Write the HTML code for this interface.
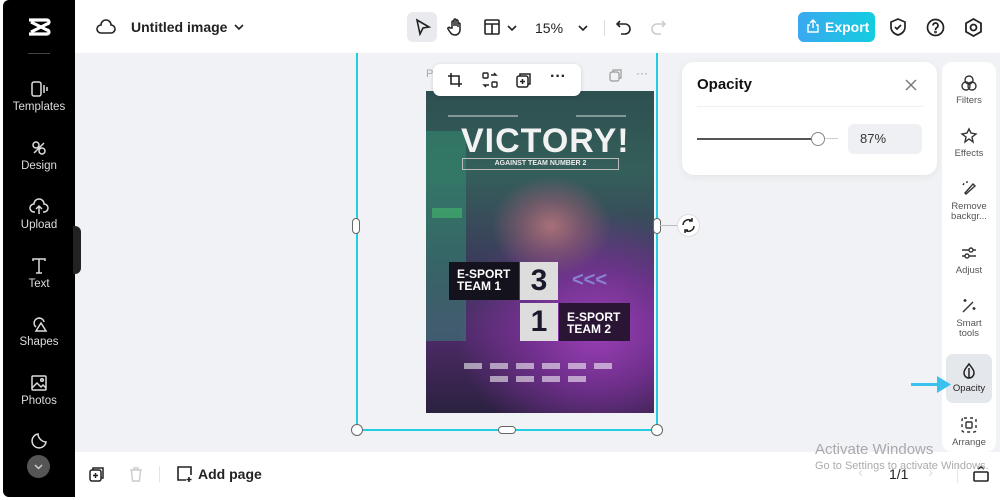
<!DOCTYPE html>
<html><head><meta charset="utf-8"><style>
*{margin:0;padding:0;box-sizing:border-box}
body{width:1000px;height:500px;overflow:hidden;background:#fff;font-family:"Liberation Sans",sans-serif;position:relative}
.abs{position:absolute}
.side{left:3px;top:0;width:72px;height:497px;background:#000;border-radius:6px 0 0 6px}
.si{position:absolute;left:0;width:72px;text-align:center;color:#ddd;font-size:11.5px}
.si svg{display:block;margin:0 auto 3px}
.rp{left:942px;top:62px;width:54px;height:390px;background:#fff;border-radius:10px}
.ri{position:absolute;left:0;width:54px;text-align:center;color:#555;font-size:9.5px;line-height:10px}
.ri svg{display:block;margin:0 auto 4px}
</style></head><body>
<div class="abs" style="left:75px;top:53px;width:925px;height:400px;background:#f0f2f5"></div>
<div class="abs side">
 <svg class="abs" style="left:24px;top:17px" width="24" height="20" viewBox="0 0 24 20"><path d="M2 3h18a2 2 0 010 4L4 15M2 17h18a2 2 0 000-4L4 5" stroke="#fff" stroke-width="3.2" fill="none" stroke-linejoin="round"/></svg>
 <div class="abs" style="left:25px;top:53px;width:22px;height:1px;background:#444"></div>
 <div class="si" style="top:80px"><svg width="18" height="18" viewBox="0 0 18 18" fill="none" stroke="#ddd" stroke-width="1.5"><rect x="2" y="2" width="9" height="14" rx="2"/><path d="M14 5v8M17 7v4"/></svg>Templates</div>
 <div class="si" style="top:139px"><svg width="18" height="18" viewBox="0 0 18 18" fill="none" stroke="#ddd" stroke-width="1.5"><circle cx="6" cy="6" r="3"/><circle cx="12" cy="12" r="3"/><path d="M4 14l10-10"/></svg>Design</div>
 <div class="si" style="top:198px"><svg width="20" height="18" viewBox="0 0 20 18" fill="none" stroke="#ddd" stroke-width="1.5"><path d="M6 14H5a4 4 0 010-8 5 5 0 0110 0 4 4 0 010 8h-1M10 16V9M7 11l3-3 3 3"/></svg>Upload</div>
 <div class="si" style="top:257px"><svg width="18" height="18" viewBox="0 0 18 18" fill="none" stroke="#ddd" stroke-width="1.5"><path d="M3 4V2h12v2M9 2v14M6 16h6"/></svg>Text</div>
 <div class="si" style="top:315px"><svg width="18" height="18" viewBox="0 0 18 18" fill="none" stroke="#ddd" stroke-width="1.5"><path d="M6 12a5 5 0 118-5"/><path d="M11 8l5 8H6z"/></svg>Shapes</div>
 <div class="si" style="top:374px"><svg width="18" height="18" viewBox="0 0 18 18" fill="none" stroke="#ddd" stroke-width="1.5"><rect x="2" y="2" width="14" height="14" rx="1"/><path d="M2 14l5-5 4 4 2-2 3 3"/><circle cx="12" cy="6" r="1.3"/></svg>Photos</div>
 <svg class="abs" style="left:27px;top:432px" width="18" height="18" viewBox="0 0 18 18" fill="none" stroke="#ddd" stroke-width="1.5"><path d="M16 10A7 7 0 118 2c0 4 4 8 8 8z"/></svg>
 <div class="abs" style="left:24px;top:455px;width:23px;height:23px;border-radius:50%;background:#555"><svg width="23" height="23" viewBox="0 0 23 23"><path d="M8 10l3.5 3.5L15 10" stroke="#ccc" stroke-width="1.5" fill="none"/></svg></div>
</div>
<div class="abs" style="left:73px;top:226px;width:8px;height:48px;background:#222;border-radius:0 6px 6px 0"></div>
<!-- top bar -->
<svg class="abs" style="left:96px;top:19px" width="20" height="18" viewBox="0 0 20 18" fill="none" stroke="#222" stroke-width="1.6"><path d="M6 14H5a4 4 0 010-8 5 5 0 0110 0 4 4 0 010 8H6z"/></svg>
<div class="abs" style="left:131px;top:19px;font-size:14px;color:#222;font-weight:bold">Untitled image</div>
<svg class="abs" style="left:233px;top:21px" width="12" height="12"><path d="M2 4l4 4 4-4" stroke="#222" stroke-width="1.6" fill="none"/></svg>
<div class="abs" style="left:407px;top:12px;width:30px;height:30px;border-radius:6px;background:#e8eaee"></div>
<svg class="abs" style="left:414px;top:18px" width="18" height="18" viewBox="0 0 18 18" fill="none" stroke="#222" stroke-width="1.6"><path d="M3 2l12 7-6 1-3 6z"/></svg>
<svg class="abs" style="left:446px;top:17px" width="20" height="20" viewBox="0 0 20 20" fill="none" stroke="#222" stroke-width="1.5"><path d="M6 11V5a1 1 0 012 0v4V3a1 1 0 012 0v6V4a1 1 0 012 0v6-3a1 1 0 012 0v6a5 5 0 01-5 5 6 6 0 01-5-3l-2-3a1 1 0 012-1z"/></svg>
<svg class="abs" style="left:484px;top:19px" width="16" height="16" viewBox="0 0 16 16" fill="none" stroke="#222" stroke-width="1.6"><rect x="1" y="1" width="14" height="14" rx="1"/><path d="M1 5h14M8 5v10"/></svg>
<svg class="abs" style="left:506px;top:22px" width="12" height="12"><path d="M2 4l4 4 4-4" stroke="#222" stroke-width="1.6" fill="none"/></svg>
<div class="abs" style="left:535px;top:20px;font-size:14px;color:#222">15%</div>
<svg class="abs" style="left:577px;top:22px" width="12" height="12"><path d="M2 4l4 4 4-4" stroke="#222" stroke-width="1.6" fill="none"/></svg>
<div class="abs" style="left:604px;top:20px;width:1px;height:16px;background:#ddd"></div>
<svg class="abs" style="left:615px;top:18px" width="18" height="18" viewBox="0 0 18 18" fill="none" stroke="#222" stroke-width="1.6"><path d="M5 3L2 6l3 3M2 6h8a5 5 0 010 10H6"/></svg>
<svg class="abs" style="left:649px;top:18px" width="18" height="18" viewBox="0 0 18 18" fill="none" stroke="#ccc" stroke-width="1.6"><path d="M13 3l3 3-3 3M16 6H8a5 5 0 000 10h4"/></svg>
<div class="abs" style="left:798px;top:12px;width:77px;height:30px;border-radius:6px;background:linear-gradient(90deg,#3aa9f0,#13cde0);color:#fff;font-size:14px;font-weight:bold;line-height:30px;padding-left:27px">Export</div>
<svg class="abs" style="left:806px;top:19px" width="14" height="14" viewBox="0 0 14 14" fill="none" stroke="#fff" stroke-width="1.4"><path d="M4 6H2v7h10V6h-2M7 9V1M4 4l3-3 3 3"/></svg>
<svg class="abs" style="left:889px;top:18px" width="18" height="18" viewBox="0 0 18 18" fill="none" stroke="#222" stroke-width="1.7"><path d="M9 1l7 3v5c0 4-3 7-7 8-4-1-7-4-7-8V4z"/><path d="M6 9l2 2 4-4"/></svg>
<svg class="abs" style="left:926px;top:18px" width="19" height="19" viewBox="0 0 19 19" fill="none" stroke="#222" stroke-width="1.7"><circle cx="9.5" cy="9.5" r="8"/><path d="M7 7.5a2.5 2.5 0 114 2c-1 .6-1.5 1-1.5 2.5"/><circle cx="9.5" cy="14" r=".5"/></svg>
<svg class="abs" style="left:964px;top:18px" width="19" height="19" viewBox="0 0 19 19" fill="none" stroke="#222" stroke-width="1.8"><path d="M9.5 1l7.5 4.25v8.5L9.5 18 2 13.75v-8.5z"/><circle cx="9.5" cy="9.5" r="3"/></svg>
<!-- canvas -->
<div class="abs" style="left:426px;top:68px;font-size:11px;color:#aaa">P</div>
<svg class="abs" style="left:609px;top:68px" width="14" height="14" viewBox="0 0 14 14" fill="none" stroke="#999" stroke-width="1.2"><rect x="1" y="4" width="9" height="9" rx="2"/><path d="M4 4V2h8v8h-2"/></svg>
<div class="abs" style="left:636px;top:66px;font-size:12px;color:#999">···</div>
<div class="abs" style="left:426px;top:91px;width:228px;height:322px;background:
radial-gradient(ellipse 60px 50px at 125px 135px,#a87078 0%,rgba(150,95,115,.6) 50%,transparent 100%),
radial-gradient(ellipse 140px 120px at 170px 240px,#9a3fb5 0%,rgba(130,50,160,.7) 50%,transparent 100%),
linear-gradient(180deg,#2e4f50 0%,#345f5a 25%,#3b3a5a 55%,#4e2b68 75%,#2b2140 100%);overflow:hidden">
 <div class="abs" style="left:0;top:40px;width:40px;height:210px;background:rgba(50,150,120,.45)"></div>
 <div class="abs" style="left:6px;top:117px;width:30px;height:10px;background:rgba(70,200,110,.5)"></div>
 <div class="abs" style="left:22px;top:24px;width:70px;height:2px;background:rgba(255,255,255,.4)"></div>
 <div class="abs" style="left:150px;top:24px;width:50px;height:2px;background:rgba(255,255,255,.4)"></div>
 <div class="abs" style="left:35px;top:31px;font-size:34px;font-weight:bold;color:#f2f2f2;letter-spacing:1px;font-family:'Liberation Sans',sans-serif">VICTORY!</div>
 <div class="abs" style="left:36px;top:67px;width:157px;height:12px;border:1px solid #bbb;color:#eee;font-size:7px;font-weight:bold;text-align:center;line-height:10px">AGAINST TEAM NUMBER 2</div>
 <div class="abs" style="left:23px;top:171px;width:70px;height:38px;background:#14121c;color:#fff;font-size:12px;font-weight:bold;line-height:12px;padding:6px 0 0 8px">E-SPORT<br>TEAM 1</div>
 <div class="abs" style="left:94px;top:171px;width:38px;height:38px;background:#ddd;color:#1a1a2a;font-size:30px;font-weight:bold;text-align:center;line-height:38px">3</div>
 <div class="abs" style="left:94px;top:212px;width:38px;height:38px;background:#ddd;color:#1a1a2a;font-size:30px;font-weight:bold;text-align:center;line-height:38px">1</div>
 <div class="abs" style="left:133px;top:212px;width:71px;height:38px;background:#2a1535;color:#fff;font-size:12px;font-weight:bold;line-height:12px;padding:8px 0 0 8px">E-SPORT<br>TEAM 2</div>
 <div class="abs" style="left:146px;top:178px;color:#8b7fd0;font-size:20px;font-weight:bold">&lt;&lt;&lt;</div>
 <div class="abs" style="left:38px;top:272px;width:150px;height:6px;background:repeating-linear-gradient(90deg,rgba(255,255,255,.55) 0 18px,transparent 18px 26px)"></div>
 <div class="abs" style="left:64px;top:285px;width:100px;height:6px;background:repeating-linear-gradient(90deg,rgba(255,255,255,.55) 0 18px,transparent 18px 26px)"></div>
</div>
<div class="abs" style="left:356px;top:53px;width:302px;height:378px;border:2px solid #22cde0;border-top:none"></div>
<div class="abs" style="left:351px;top:424px;width:12px;height:12px;border-radius:50%;background:#fff;border:1px solid #666"></div>
<div class="abs" style="left:651px;top:424px;width:12px;height:12px;border-radius:50%;background:#fff;border:1px solid #666"></div>
<div class="abs" style="left:498px;top:426px;width:18px;height:8px;border-radius:4px;background:#fff;border:1px solid #666"></div>
<div class="abs" style="left:352px;top:218px;width:8px;height:16px;border-radius:4px;background:#fff;border:1px solid #666"></div>
<div class="abs" style="left:653px;top:218px;width:8px;height:16px;border-radius:4px;background:#fff;border:1px solid #666"></div>
<div class="abs" style="left:660px;top:225px;width:18px;height:1px;background:#bbb"></div>
<div class="abs" style="left:677px;top:214px;width:23px;height:23px;border-radius:50%;background:#fff;border:1px solid #ddd"><svg width="21" height="21" viewBox="0 0 21 21" fill="none" stroke="#222" stroke-width="1.5"><path d="M5 10a5.5 5.5 0 019-4M16 11a5.5 5.5 0 01-9 4M14 3v3h-3M7 18v-3h3"/></svg></div>
<div class="abs" style="left:433px;top:64px;width:148px;height:32px;background:#fff;border-radius:7px;box-shadow:0 1px 4px rgba(0,0,0,.15)">
 <svg class="abs" style="left:14px;top:8px" width="16" height="16" viewBox="0 0 16 16" fill="none" stroke="#222" stroke-width="1.6"><path d="M4 1v11h11M1 4h11v11"/></svg>
 <svg class="abs" style="left:49px;top:8px" width="16" height="16" viewBox="0 0 16 16" fill="none" stroke="#222" stroke-width="1.4"><rect x="1" y="1" width="5" height="5" rx="1"/><rect x="10" y="10" width="5" height="5" rx="1"/><path d="M9 3h5l-2-2M7 13H2l2 2"/></svg>
 <svg class="abs" style="left:83px;top:8px" width="16" height="16" viewBox="0 0 16 16" fill="none" stroke="#222" stroke-width="1.5"><rect x="1" y="4" width="11" height="11" rx="2"/><path d="M4 4V2h10v10h-2M6.5 7v5M4 9.5h5"/></svg>
 <div class="abs" style="left:117px;top:4px;font-size:16px;font-weight:bold;color:#222">···</div>
</div>
<!-- opacity panel -->
<div class="abs" style="left:682px;top:62px;width:255px;height:113px;background:#fff;border-radius:12px;box-shadow:0 2px 8px rgba(0,0,0,.06)">
 <div class="abs" style="left:15px;top:14px;font-size:15px;font-weight:bold;color:#111">Opacity</div>
 <svg class="abs" style="left:222px;top:16px" width="14" height="14"><path d="M2 2l10 10M12 2L2 12" stroke="#777" stroke-width="1.4"/></svg>
 <div class="abs" style="left:15px;top:44px;width:226px;height:1px;background:#f0f0f0"></div>
 <div class="abs" style="left:15px;top:76px;width:122px;height:2px;background:#555"></div>
 <div class="abs" style="left:137px;top:76px;width:19px;height:1px;background:#ccc"></div>
 <div class="abs" style="left:129px;top:70px;width:14px;height:14px;border-radius:50%;background:#fff;border:1px solid #888"></div>
 <div class="abs" style="left:166px;top:62px;width:74px;height:30px;background:#eef0f3;border-radius:6px;font-size:13px;color:#333;line-height:30px;padding-left:12px">87%</div>
</div>
<!-- right panel -->
<div class="abs rp">
 <div class="ri" style="top:12px"><svg width="18" height="18" viewBox="0 0 18 18" fill="none" stroke="#333" stroke-width="1.4"><circle cx="9" cy="6" r="4"/><circle cx="6" cy="12" r="4"/><circle cx="12" cy="12" r="4"/></svg>Filters</div>
 <div class="ri" style="top:65px"><svg width="18" height="18" viewBox="0 0 18 18" fill="none" stroke="#333" stroke-width="1.4"><path d="M9 2l2 4 5 1-4 3 1 5-4-3-4 3 1-5-4-3 5-1z"/></svg>Effects</div>
 <div class="ri" style="top:118px"><svg width="18" height="18" viewBox="0 0 18 18" fill="none" stroke="#333" stroke-width="1.4"><path d="M3 5a6 6 0 016-3" stroke-dasharray="2 2"/><path d="M5 13l8-9 2 2-9 8z"/></svg>Remove<br>backgr...</div>
 <div class="ri" style="top:182px"><svg width="18" height="18" viewBox="0 0 18 18" fill="none" stroke="#333" stroke-width="1.4"><path d="M2 6h14M2 12h14"/><circle cx="11" cy="6" r="2" fill="#fff"/><circle cx="7" cy="12" r="2" fill="#fff"/></svg>Adjust</div>
 <div class="ri" style="top:235px"><svg width="18" height="18" viewBox="0 0 18 18" fill="none" stroke="#333" stroke-width="1.4"><path d="M3 15L13 5M5 2v3M3.5 3.5h3M14 10v3M12.5 11.5h3"/></svg>Smart<br>tools</div>
 <div class="abs" style="left:4px;top:292px;width:46px;height:49px;background:#e4e7ec;border-radius:7px"></div>
 <div class="ri" style="top:300px;color:#222"><svg width="18" height="18" viewBox="0 0 18 18" fill="none" stroke="#222" stroke-width="1.5"><path d="M9 2c3 4 5 6 5 9a5 5 0 01-10 0c0-3 2-5 5-9z"/><path d="M9 6v10" /></svg>Opacity</div>
 <div class="ri" style="top:354px"><svg width="18" height="18" viewBox="0 0 18 18" fill="none" stroke="#333" stroke-width="1.4"><rect x="2" y="2" width="14" height="14" rx="2" stroke-dasharray="3 3"/><rect x="6" y="6" width="6" height="6" rx="1"/></svg>Arrange</div>
</div>
<div class="abs" style="left:911px;top:383px;width:32px;height:3px;background:#3cc0ee"></div>
<svg class="abs" style="left:937px;top:376px" width="14" height="17"><path d="M0 0l14 8.5L0 17z" fill="#3cc0ee"/></svg>
<!-- bottom -->
<div class="abs" style="left:75px;top:452px;width:925px;height:45px;background:#fff"></div>
<svg class="abs" style="left:89px;top:466px" width="16" height="16" viewBox="0 0 16 16" fill="none" stroke="#222" stroke-width="1.5"><rect x="1" y="4" width="11" height="11" rx="2"/><path d="M4 4V2h10v10h-2M6.5 7v5M4 9.5h5"/></svg>
<svg class="abs" style="left:128px;top:466px" width="16" height="16" viewBox="0 0 16 16" fill="none" stroke="#ccc" stroke-width="1.4"><path d="M2 4h12M6 4V2h4v2M3.5 4l1 11h7l1-11"/></svg>
<div class="abs" style="left:159px;top:466px;width:1px;height:16px;background:#e5e5e5"></div>
<svg class="abs" style="left:176px;top:465px" width="17" height="17" viewBox="0 0 17 17" fill="none" stroke="#222" stroke-width="1.6"><path d="M10 15H2V2h13v8M13 12v5M10.5 14.5h5"/></svg>
<div class="abs" style="left:198px;top:466px;font-size:14px;font-weight:bold;color:#222">Add page</div>
<div class="abs" style="left:889px;top:466px;font-size:14px;color:#222">1/1</div>
<div class="abs" style="left:858px;top:464px;font-size:15px;color:#ddd">‹</div>
<div class="abs" style="left:928px;top:464px;font-size:15px;color:#ddd">›</div>
<div class="abs" style="left:957px;top:463px;width:1px;height:20px;background:#e5e5e5"></div>
<svg class="abs" style="left:973px;top:466px" width="16" height="16" viewBox="0 0 16 16" fill="none" stroke="#222" stroke-width="1.6"><rect x="1" y="6" width="14" height="9" rx="1"/><path d="M5 3l3-2 3 2"/></svg>
<div class="abs" style="left:815px;top:441px;font-size:15px;color:rgba(150,150,150,.8)">Activate Windows</div>
<div class="abs" style="left:815px;top:460px;font-size:11px;color:rgba(150,150,150,.8)">Go to Settings to activate Windows.</div>
</body></html>
